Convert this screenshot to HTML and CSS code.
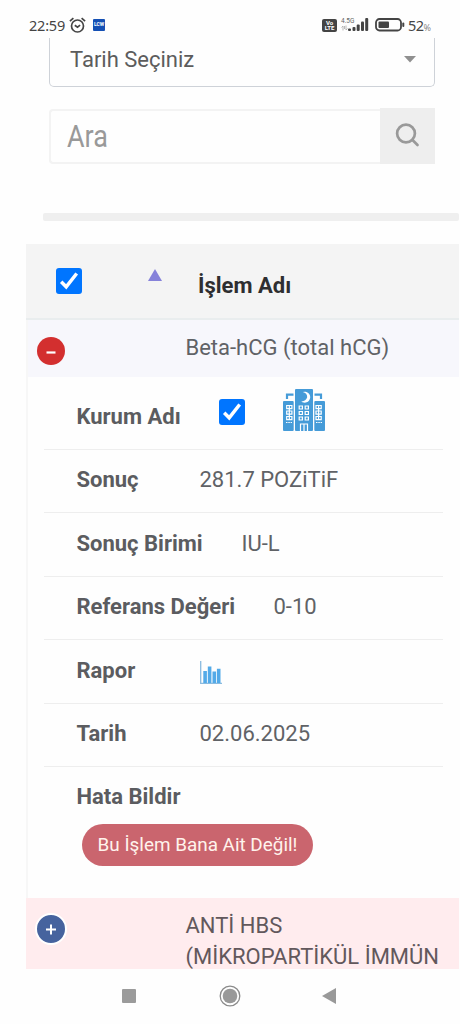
FILE: index.html
```html
<!DOCTYPE html>
<html lang="tr">
<head>
<meta charset="utf-8">
<title>Tahlil Sonuçları</title>
<link rel="stylesheet" href="styles.css">
</head>
<body>
<div class="screen">
  <header class="status">
    <span class="clock">22:59</span>
    <svg class="alarm" width="17" height="17" viewBox="0 0 17 17" fill="none" stroke="#444" stroke-width="1.7"><circle cx="8.5" cy="9" r="6"/><path d="M5.8 8.2l2.7 2 2.6-2M.9 4.2L4.4 1.2M16.1 4.2l-3.5-3"/></svg>
    <span class="low">LCW</span>
    <span class="volte"><span>Vo</span><span>LTE</span></span>
    <span class="network"><span>4.5G</span><svg width="7" height="6" viewBox="0 0 7 6" fill="none" stroke="#aaa" stroke-width=".8"><path d="M2 5.5V1L.5 2.5M5 .5V5l1.5-1.5M3.5 1v3"/></svg></span>
    <svg class="signal" width="21" height="14" viewBox="0 0 21 14" fill="#444"><rect x="0" y="10.500" width="3" height="2.500" rx="1"/><rect x="4.500" y="9" width="3" height="4" rx="1"/><rect x="8.700" y="6.500" width="3" height="6.500" rx="1"/><rect x="13" y="3.500" width="3" height="9.500" rx="1"/><rect x="17.200" y="0" width="3" height="13" rx="1"/></svg>
    <svg class="battery" width="30" height="14" viewBox="0 0 30 14"><rect x="1" y="1" width="25" height="11.500" rx="3.500" fill="none" stroke="#444" stroke-width="1.800"/><rect x="3.500" y="3.500" width="10.500" height="6.500" rx="1" fill="#444"/><rect x="27.300" y="4.500" width="2" height="4.500" rx="1" fill="#444"/></svg>
    <span class="percent">52<small>%</small></span>
  </header>

  <main class="content">
    <div class="select"><span class="select-text">Tarih Seçiniz</span><svg width="12" height="7" viewBox="0 0 12 7"><path d="M0 0h12L6 6.500z" fill="#909090"/></svg></div>
    <div class="search">
      <div class="search-field"><span class="search-text">Ara</span></div>
      <div class="search-button"><svg width="25" height="25" viewBox="0 0 25 25" fill="none" stroke="#999" stroke-width="2.700" stroke-linecap="round"><circle cx="11" cy="10.500" r="8.900"/><path d="M17.500 17l5 5"/></svg></div>
    </div>
    <div class="divider"></div>

    <section class="results">
      <div class="head">
        <svg class="check" width="26" height="26" viewBox="0 0 26 26"><rect width="26" height="26" rx="3" fill="#0075ff"/><path d="M5.200 13.800l5 5L20.700 5.500" fill="none" stroke="#fff" stroke-width="3.500"/></svg>
        <svg class="sort" width="14" height="12" viewBox="0 0 14 12"><path d="M7 0l7 12H0z" fill="#8682da"/></svg>
        <span class="head-title">İşlem Adı</span>
      </div>
      <div class="item">
        <span class="toggle minus"><svg width="12" height="12" viewBox="0 0 12 12"><path d="M1.500 7.500h9" stroke="#fff" stroke-width="2.200"/></svg></span>
        <span class="item-name beta">Beta-hCG (total hCG)</span>
      </div>
      <div class="details">
        <div class="row first"><span class="label kurum">Kurum Adı</span>
          <svg class="check row-check" width="26" height="26" viewBox="0 0 26 26"><rect width="26" height="26" rx="3" fill="#0075ff"/><path d="M5.200 13.800l5 5L20.700 5.500" fill="none" stroke="#fff" stroke-width="3.500"/></svg>
          <svg class="hospital" width="42" height="42" viewBox="0 0 42 42">
            <g fill="#459bd8"><rect x="12" y="0" width="18" height="42" rx="1"/><rect x="0" y="12" width="10.700" height="30" rx="1"/><rect x="31.300" y="12" width="10.700" height="30" rx="1"/></g>
            <path d="M4 10V5.700h6.500M38 10V5.700h-6.500" fill="none" stroke="#459bd8" stroke-width="2.200"/>
            <path d="M19.800 3a5.500 5.500 0 1 1-1.600 9.400 6 6 0 0 0 6-4.100A5.400 5.400 0 0 0 19.800 3z" fill="#fff"/>
            <g fill="none" stroke="#fff" stroke-width="1.200"><path d="M16.200 17h3.200v3h-3.200zM22.200 17h3.200v3h-3.200zM16.200 22.500h3.200v3h-3.200zM22.200 22.500h3.200v3h-3.200zM16.200 28h3.200v3h-3.200zM22.200 28h3.200v3h-3.200z"/><path d="M17.500 42v-7h7v7M21 35v7"/><path d="M3.700 16.500h5.200v3.200H3.700zM3.700 22h5.200v3.200H3.700zM3.700 27.500h5.200v3.200H3.700zM6.300 16.500v14.200M33 16.500h5.200v3.200H33zM33 22h5.200v3.200H33zM33 27.500h5.200v3.200H33zM35.600 16.500v14.200"/><path d="M3 33.500h6M33 33.500h6" stroke-dasharray="1.500 .8"/></g>
          </svg>
        </div>
        <div class="row"><span class="label sonuc">Sonuç</span><span class="value result">281.7 POZiTiF</span></div>
        <div class="row"><span class="label birim">Sonuç Birimi</span><span class="value unit">IU-L</span></div>
        <div class="row"><span class="label referans">Referans Değeri</span><span class="value range">0-10</span></div>
        <div class="row"><span class="label rapor">Rapor</span><svg class="chart" width="22" height="23" viewBox="0 0 22 23"><path d="M.7 0v22.300H22" fill="none" stroke="#8abbdf" stroke-width="1.300"/><path d="M3.300 10h3.600v12H3.300zM7.800 5.500h3.600V22H7.800zM12.500 10.500h3.600V22h-3.600zM16.900 7.700h3.600V22h-3.600z" fill="#53aae8"/></svg></div>
        <div class="row"><span class="label tarih">Tarih</span><span class="value date">02.06.2025</span></div>
        <div class="report"><span class="label hata">Hata Bildir</span><div class="report-button"><span>Bu İşlem Bana Ait Değil!</span></div></div>
      </div>
      <div class="item next">
        <span class="toggle plus"><svg width="12" height="12" viewBox="0 0 12 12"><path d="M1 6.500h10M6 1.500v10" stroke="#fff" stroke-width="2"/></svg></span>
        <span class="item-name anti">ANTİ HBS<br>(MİKROPARTİKÜL İMMÜN</span>
      </div>
    </section>
  </main>

  <nav class="nav">
    <svg width="14" height="14" viewBox="0 0 14 14"><rect width="14" height="14" rx="1" fill="#9b9b9b"/></svg>
    <svg width="22" height="22" viewBox="0 0 22 22"><circle cx="11" cy="11" r="9.800" fill="none" stroke="#8b8b8b" stroke-width="1.300"/><circle cx="11" cy="11" r="7.300" fill="#999"/></svg>
    <svg width="14" height="16" viewBox="0 0 14 16"><path d="M0 8L14 0v16z" fill="#999"/></svg>
  </nav>
</div>
</body>
</html>
```
FILE: styles.css
```css
* { box-sizing: border-box; }
body { margin: 0; background: #fefefe; font-family: Roboto, "Liberation Sans", sans-serif; color: #5a5c60; }
svg { display: block; flex: none; }
span { white-space: nowrap; }
.screen { width: 460px; height: 1024px; overflow: hidden; display: flex; flex-direction: column; }

.status { height: 38px; flex: none; display: flex; align-items: center; padding: 12px 0 0 29px; color: #444; }
.clock { width: 37px; font-family: "Noto Sans", sans-serif; font-size: 14.500px; letter-spacing: -.2px; }
.alarm { margin-left: 3px; }
.low { width: 12px; height: 12px; margin-left: 7px; background: #1450b4; color: #fff; font-size: 5px; font-weight: 700; line-height: 11px; text-align: center; border-radius: 1px; }
.volte { width: 15px; height: 13px; margin-left: 217px; padding-top: 1px; background: #444; border-radius: 2px; color: #fff; font-size: 6px; font-weight: 700; line-height: 5.500px; display: flex; flex-direction: column; align-items: center; }
.network { width: 15px; height: 16px; margin-left: 4px; font-size: 6.500px; line-height: 8px; color: #666; display: flex; flex-direction: column; }
.signal { margin: 0 6px 0 -8px; }
.percent { margin-left: 3px; font-family: "Noto Sans", sans-serif; font-size: 14.500px; letter-spacing: -.5px; }
.percent small { font-size: 9px; color: #888; }

.content { flex: none; height: 931px; overflow: hidden; }
.select { width: 386px; height: 49px; margin-left: 49px; border: 1px solid #ced2d8; border-top: 0; border-radius: 0 0 5px 5px; display: flex; align-items: center; justify-content: space-between; padding: 0 18px 6px 20px; color: #5c5c5c; font-size: 22px; }
.search { width: 386px; height: 56px; margin: 21px 0 0 49px; display: flex; }
.search-field { flex: 1; height: 55px; margin-top: 1px; border: 2px solid #f3f3f3; border-right: 0; border-radius: 4px 0 0 4px; padding: 0 0 0 16px; display: flex; align-items: center; }
.search-text { font-size: 31px; color: #999; transform: scaleX(.87); transform-origin: left; }
.search-button { width: 55px; padding-bottom: 2px; background: #eee; display: flex; align-items: center; justify-content: center; }
.divider { width: 416px; height: 8px; margin: 49px 0 0 43px; background: #efefef; border-radius: 2px; }

.results { width: 433px; margin: 23px 0 0 26px; border-left: 2px solid #f7f7f7; }
.head { height: 76px; display: flex; background: #f4f4f4; border-bottom: 2px solid #e9edee; margin-left: -2px; padding-left: 30px; }
.head .check { margin-top: 24px; }
.sort { margin: 25px 0 0 66px; }
.head-title { margin: 29px 0 0 36px; font-size: 22px; line-height: 26px; font-weight: 700; color: #2e2e30; }
.item { height: 57px; display: flex; background: #f7f7fc; padding-left: 9px; }
.toggle { width: 28px; height: 28px; flex: none; border-radius: 50%; display: flex; align-items: center; justify-content: center; margin-top: 17px; }
.minus { background: #d32f2f; }
.plus { width: 32px; height: 32px; margin: 15px 0 0 -2px; background: #46639e; border: 2px solid #fff; }
.item-name { margin: 15px 0 0 120.500px; font-size: 22px; line-height: 26px; color: #606266; }
.details { height: 521px; padding: 0 16px; }
.row { height: 63.400px; border-bottom: 1px solid #eee; display: flex; align-items: center; padding: 0 0 1.500px 32.500px; }
.row.first { height: 73px; align-items: flex-start; }
.label { font-size: 22px; line-height: 26px; font-weight: 700; color: #5b5c60; }
.row.first .label { width: 104px; margin-top: 27px; }
.row-check { margin: 22px 0 0 38px; }
.hospital { margin: 12px 0 0 38px; }
.value { font-size: 22px; line-height: 26px; color: #606266; }
.sonuc, .rapor, .tarih { width: 123px; }
.birim { width: 165px; }
.referans { width: 197px; }
.chart { margin-top: 3px; }
.report { padding: 17px 0 0 32.500px; }
.report .label { display: block; }
.report-button { width: 231px; height: 42px; margin: 14px 0 0 5.500px; border-radius: 21px; background: #ca656e; color: #fff3ec; font-size: 18.900px; display: flex; align-items: center; justify-content: center; }
.next { height: 71px; background: #ffecee; margin-left: -2px; padding-left: 11px; }
.anti { margin-top: 12px; margin-left: 118.500px; line-height: 31px; color: #62585c; }

.nav { flex: 1; display: flex; align-items: center; padding: 0 0 1px 122px; }
.nav svg:nth-child(2) { margin-left: 83px; }
.nav svg:nth-child(3) { margin-left: 81px; }
```
